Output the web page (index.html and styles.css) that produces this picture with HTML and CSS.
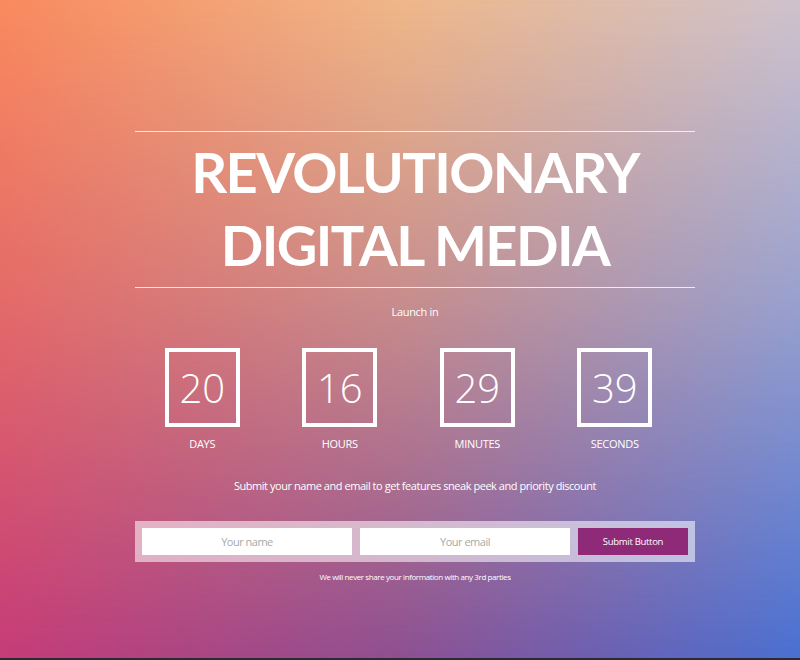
FILE: index.html
```html
<!DOCTYPE html>
<html lang="en">
<head>
<meta charset="utf-8">
<title>Revolutionary Digital Media</title>
<link rel="stylesheet" href="styles.css">
</head>
<body>
<div class="page">
  <main class="wrap">
    <hr class="rule">
    <h1 class="title">REVOLUTIONARY<br>DIGITAL MEDIA</h1>
    <hr class="rule rule-bottom">
    <p class="launch">Launch in</p>
    <div class="countdown">
      <div class="unit"><div class="box">20</div><div class="label">DAYS</div></div>
      <div class="unit"><div class="box">16</div><div class="label">HOURS</div></div>
      <div class="unit"><div class="box">29</div><div class="label">MINUTES</div></div>
      <div class="unit"><div class="box">39</div><div class="label">SECONDS</div></div>
    </div>
    <p class="lead">Submit your name and email to get features sneak peek and priority discount</p>
    <form class="signup" onsubmit="return false">
      <input class="field" type="text" placeholder="Your name">
      <input class="field" type="email" placeholder="Your email">
      <button class="submit" type="submit">Submit Button</button>
    </form>
    <p class="note">We will never share your information with any 3rd parties</p>
  </main>
</div>
</body>
</html>
```

FILE: styles.css
```css
html {
  background: #2a2a32;
}
body {
  margin: 0;
  font-family: "Open Sans", "Noto Sans", sans-serif;
  color: #fff;
}
.page {
  position: relative;
  height: 658px;
  overflow: hidden;
  background: linear-gradient(to right, #c63c78 0%, #8e5092 50%, #4a70d2 100%);
}
.page::before {
  content: "";
  position: absolute;
  inset: 0;
  background: linear-gradient(to right, #f98a5e 0%, #efb788 50%, #cfc2cc 100%);
  -webkit-mask-image: linear-gradient(to bottom, #000 0%, rgba(0,0,0,0.6) 45%, transparent 100%);
  mask-image: linear-gradient(to bottom, #000 0%, rgba(0,0,0,0.6) 45%, transparent 100%);
}
.wrap {
  position: relative;
  width: 560px;
  margin-left: 135px;
  padding-top: 131px;
  text-align: center;
}
.rule {
  margin: 0;
  border: 0;
  height: 1px;
  background: rgba(255,255,255,0.8);
}
.title {
  margin: 3px 0 6px;
  font-family: "Lato", sans-serif;
  font-weight: 700;
  font-size: 56px;
  line-height: 73px;
  letter-spacing: -1.6px;
}
.launch {
  margin: 16px 0 0;
  font-size: 11px;
  line-height: 16px;
  letter-spacing: -0.3px;
}
.countdown {
  display: grid;
  grid-template-columns: repeat(4, 137.5px);
  margin: 28px 0 0 -1.5px;
}
.unit {
  display: flex;
  flex-direction: column;
  align-items: center;
}
.box {
  box-sizing: border-box;
  width: 75px;
  height: 79px;
  border: 4px solid #fff;
  display: flex;
  align-items: center;
  justify-content: center;
  font-weight: 300;
  font-size: 40px;
  line-height: 1;
}
.label {
  margin-top: 9px;
  font-size: 11px;
  line-height: 16px;
  letter-spacing: -0.3px;
}
.lead {
  margin: 25px 0 0;
  font-size: 11px;
  line-height: 18px;
  letter-spacing: -0.45px;
}
.signup {
  margin: 26px 0 0;
  padding: 7px;
  display: flex;
  gap: 8px;
  background: rgba(255,255,255,0.55);
}
.field {
  box-sizing: border-box;
  width: 210px;
  height: 27px;
  border: 0;
  margin: 0;
  padding: 0 8px;
  background: #fff;
  text-align: center;
  font-family: inherit;
  font-size: 11px;
  letter-spacing: -0.5px;
  color: #555;
  outline: none;
}
.field::placeholder {
  color: #a8a8a8;
}
.submit {
  flex: 1;
  height: 27px;
  border: 0;
  margin: 0;
  background: #8f2a79;
  color: #fff;
  font-family: inherit;
  font-size: 9.5px;
  letter-spacing: -0.3px;
}
.note {
  margin: 9px 0 0;
  font-size: 8px;
  line-height: 12px;
  letter-spacing: -0.4px;
}
```
